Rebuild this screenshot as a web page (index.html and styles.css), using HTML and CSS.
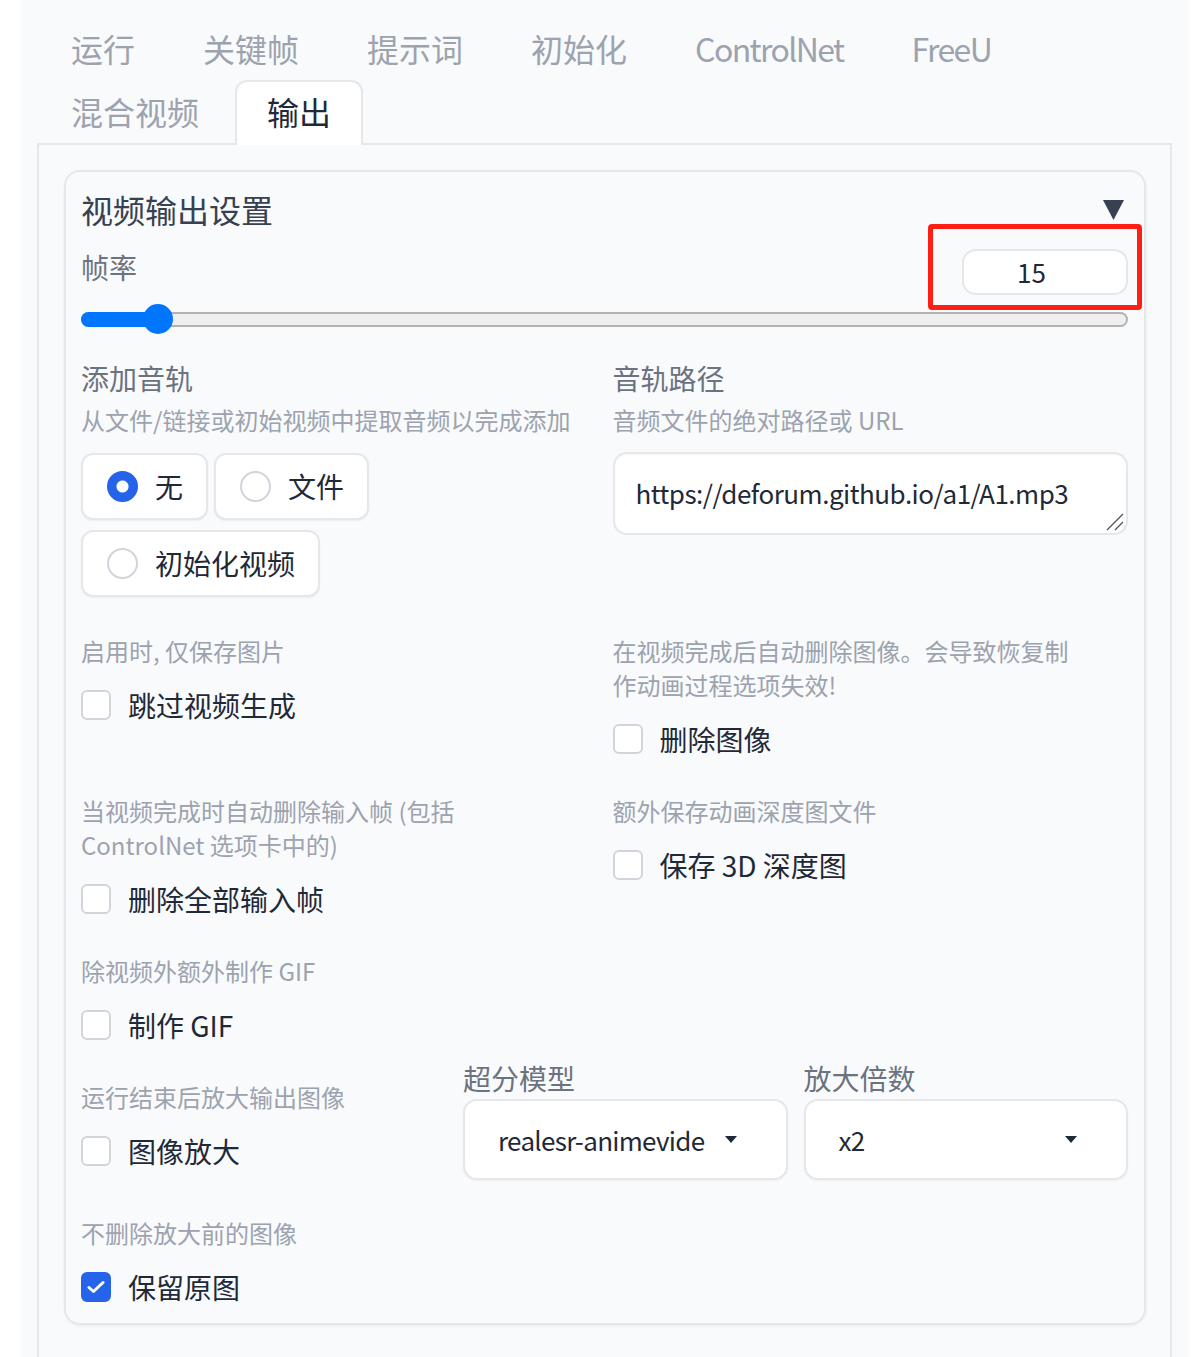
FILE: index.html
```html
<!DOCTYPE html>
<html lang="zh-CN">
<head>
    <meta charset="UTF-8">
    <title>输出</title>
    <link rel="stylesheet" href="styles.css">
</head>
<body>
<div class="app">
    <div class="tabs">
        <!-- 标签栏 -->
        <div class="tab-nav">
            <div class="tab">运行</div>
            <div class="tab">关键帧</div>
            <div class="tab">提示词</div>
            <div class="tab">初始化</div>
            <div class="tab latin">ControlNet</div>
            <div class="tab latin">FreeU</div>
            <div class="tab">混合视频</div>
            <div class="tab selected">输出</div>
        </div>

        <div class="tab-panel">
            <div class="accordion">
                <div class="accordion-head">
                    <span class="accordion-title">视频输出设置</span>
                    <svg class="accordion-arrow" width="21" height="21" viewBox="0 0 21 21"><polygon points="0,1 21,1 10.5,21" fill="#374151"/></svg>
                </div>

                <!-- 帧率 -->
                <div class="rate-row">
                    <span class="label">帧率</span>
                    <div class="number-box">15</div>
                    <div class="annotation"></div>
                </div>
                <div class="slider">
                    <div class="slider-track"></div>
                    <div class="slider-fill"></div>
                    <div class="slider-thumb"></div>
                </div>

                <div class="options">
                    <div class="field">
                        <div class="label">添加音轨</div>
                        <div class="info">从文件/链接或初始视频中提取音频以完成添加</div>
                        <div class="radio-group">
                            <div class="radio"><span class="radio-dot checked"></span>无</div>
                            <div class="radio"><span class="radio-dot"></span>文件</div>
                            <div class="radio"><span class="radio-dot"></span>初始化视频</div>
                        </div>
                    </div>
                    <div class="field">
                        <div class="label">音轨路径</div>
                        <div class="info">音频文件的绝对路径或 URL</div>
                        <div class="textbox">
                            https://deforum.github.io/a1/A1.mp3
                            <svg class="grip" width="18" height="18" viewBox="0 0 18 18"><path d="M17 1 L1 17 M17 9 L9 17" stroke="#555" stroke-width="1.3" fill="none"/></svg>
                        </div>
                    </div>

                    <div class="field">
                        <div class="info">启用时, 仅保存图片</div>
                        <div class="check"><span class="check-box"></span>跳过视频生成</div>
                    </div>
                    <div class="field">
                        <div class="info">在视频完成后自动删除图像。会导致恢复制<br>作动画过程选项失效!</div>
                        <div class="check"><span class="check-box"></span>删除图像</div>
                    </div>

                    <div class="field">
                        <div class="info">当视频完成时自动删除输入帧 (包括<br>ControlNet 选项卡中的)</div>
                        <div class="check"><span class="check-box"></span>删除全部输入帧</div>
                    </div>
                    <div class="field">
                        <div class="info">额外保存动画深度图文件</div>
                        <div class="check"><span class="check-box"></span>保存 3D 深度图</div>
                    </div>

                    <div class="field">
                        <div class="info">除视频外额外制作 GIF</div>
                        <div class="check"><span class="check-box"></span>制作 GIF</div>
                    </div>
                </div>

                <!-- 放大 -->
                <div class="upscale-row">
                    <div class="field upscale-check">
                        <div class="info">运行结束后放大输出图像</div>
                        <div class="check"><span class="check-box"></span>图像放大</div>
                    </div>
                    <div class="field">
                        <div class="label">超分模型</div>
                        <div class="select">
                            <span class="select-value">realesr-animevide</span>
                            <svg width="12" height="7" viewBox="0 0 12 7"><polygon points="0,0 12,0 6,7" fill="#1f2937"/></svg>
                        </div>
                    </div>
                    <div class="field">
                        <div class="label">放大倍数</div>
                        <div class="select">
                            <span class="select-value">x2</span>
                            <svg width="12" height="7" viewBox="0 0 12 7"><polygon points="0,0 12,0 6,7" fill="#1f2937"/></svg>
                        </div>
                    </div>
                </div>

                <div class="field last-row">
                    <div class="info">不删除放大前的图像</div>
                    <div class="check">
                        <span class="check-box checked">
                            <svg width="18" height="14" viewBox="0 0 18 14"><path d="M2 7.5 L6.5 11.5 L16 2.5" stroke="#fff" stroke-width="3" fill="none" stroke-linecap="round" stroke-linejoin="round"/></svg>
                        </span>保留原图
                    </div>
                </div>
            </div>
        </div>
    </div>
</div>
</body>
</html>
```

FILE: styles.css
```css
* {
    box-sizing: border-box;
}

body {
    margin: 0;
    background: #fff;
    font-family: "Noto Sans CJK SC", "Noto Sans", sans-serif;
    color: #1f2937;
}

.app {
    margin-left: 21px;
    width: 1168px;
    min-height: 100vh;
    background: #f9fafb;
    padding: 17px 0 0 16px;
}

.tabs {
    width: 1135px;
}

.tab-nav {
    display: flex;
    flex-wrap: wrap;
    align-items: flex-start;
    column-gap: 4px;
    padding-left: 2px;
}

.tab {
    height: 63px;
    padding: 0 30px;
    border: 2px solid transparent;
    border-bottom: none;
    border-radius: 12px 12px 0 0;
    font-size: 32px;
    line-height: 58px;
    color: #9ca3af;
}

.tab.latin {
    letter-spacing: -1.6px;
}

.tab.selected {
    height: 65px;
    position: relative;
    z-index: 1;
    background: #fff;
    border-color: #e5e7eb;
    color: #1f2937;
}

.tab-panel {
    margin-top: -2px;
    border: 2px solid #e5e7eb;
    padding: 25px 24px 60px 25px;
}

.accordion {
    border: 2px solid #e5e7eb;
    border-radius: 16px;
    padding: 17px 16px 18px 15px;
    box-shadow: 0 1px 3px rgba(0, 0, 0, 0.06);
}

.accordion-head {
    display: flex;
    justify-content: space-between;
    align-items: center;
    height: 40px;
}

.accordion-title {
    font-size: 32px;
    line-height: 40px;
    color: #374151;
}

.accordion-arrow {
    margin-right: 4px;
}

.label {
    font-size: 28px;
    line-height: 36px;
    color: #6b7280;
}

.info {
    font-size: 24px;
    line-height: 34px;
    color: #9ca3af;
}

.label + .info {
    margin-top: 7px;
}

/* 帧率 */
.rate-row {
    position: relative;
    display: flex;
    justify-content: space-between;
    align-items: flex-start;
    margin-top: 20px;
}

.number-box {
    width: 166px;
    height: 46px;
    border: 2px solid #e5e7eb;
    border-radius: 14px;
    background: #fff;
    padding-left: 53px;
    font-size: 26px;
    line-height: 42px;
}

.annotation {
    position: absolute;
    top: -25px;
    right: -14px;
    width: 214px;
    height: 86px;
    border: 5px solid #ff1e14;
    border-radius: 4px;
}

.slider {
    position: relative;
    height: 30px;
    margin-top: 9px;
}

.slider-track {
    position: absolute;
    left: 0;
    right: 0;
    top: 8px;
    height: 15px;
    border: 2px solid #b2b2b2;
    border-radius: 8px;
    background: #efefef;
}

.slider-fill {
    position: absolute;
    left: 0;
    top: 8px;
    width: 84px;
    height: 15px;
    border-radius: 8px;
    background: #0075ff;
}

.slider-thumb {
    position: absolute;
    left: 62px;
    top: 0;
    width: 30px;
    height: 30px;
    border-radius: 50%;
    background: #0075ff;
}

/* 选项网格 */
.options {
    display: grid;
    grid-template-columns: minmax(0, 1fr) minmax(0, 1fr);
    column-gap: 16px;
    row-gap: 37px;
    margin-top: 26px;
}

.radio-group {
    display: flex;
    flex-wrap: wrap;
    gap: 10px 6px;
    margin-top: 16px;
}

.radio {
    display: flex;
    align-items: center;
    gap: 17px;
    padding: 14px 23px 14px 24px;
    border: 2px solid #e5e7eb;
    border-radius: 12px;
    background: #fff;
    box-shadow: 0 1px 2px rgba(0, 0, 0, 0.05);
    font-size: 28px;
    line-height: 35px;
}

.radio-dot {
    width: 31px;
    height: 31px;
    border-radius: 50%;
    border: 2px solid #d1d5db;
    background: #fff;
}

.radio-dot.checked {
    border-color: #2563eb;
    background: radial-gradient(circle, #fff 0 5.5px, #2563eb 6.5px);
}

.textbox {
    position: relative;
    margin-top: 15px;
    height: 83px;
    border: 2px solid #e5e7eb;
    border-radius: 14px;
    background: #fff;
    padding: 22px 21px;
    font-size: 26px;
    line-height: 34px;
    letter-spacing: -0.5px;
    box-shadow: inset 0 1px 2px rgba(0, 0, 0, 0.04);
}

.grip {
    position: absolute;
    right: 2px;
    bottom: 2px;
}

.check {
    display: flex;
    align-items: center;
    gap: 17px;
    margin-top: 19px;
    font-size: 28px;
    line-height: 36px;
}

.check-box {
    display: flex;
    align-items: center;
    justify-content: center;
    width: 30px;
    height: 30px;
    border: 2px solid #d1d5db;
    border-radius: 6px;
    background: #fff;
}

.check-box.checked {
    border-color: #2563eb;
    background: #2563eb;
}

/* 放大 */
.upscale-row {
    display: grid;
    grid-template-columns: 366px minmax(0, 1fr) minmax(0, 1fr);
    column-gap: 16px;
    align-items: start;
    margin-top: 17px;
}

.upscale-check {
    padding-top: 20px;
}

.select {
    display: flex;
    align-items: center;
    gap: 17px;
    height: 81px;
    margin-top: 3px;
    padding: 0 49px 0 33px;
    border: 2px solid #e5e7eb;
    border-radius: 14px;
    background: #fff;
    box-shadow: 0 1px 2px rgba(0, 0, 0, 0.05);
    font-size: 26px;
    letter-spacing: -0.7px;
}

.select-value {
    flex: 1;
    min-width: 0;
    white-space: nowrap;
}

.last-row {
    margin-top: 36px;
}
```
